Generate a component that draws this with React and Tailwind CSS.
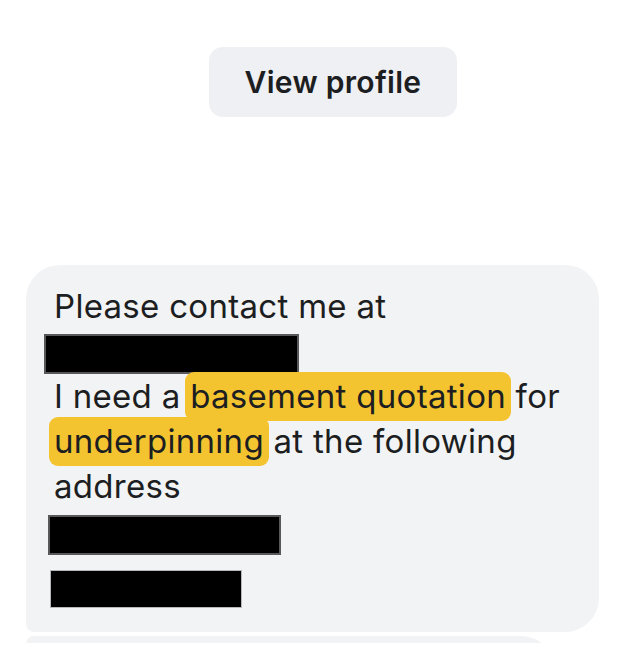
import React from 'react';

const Mark = ({ children }) => (
  <span className="bg-[#f4c430] rounded-[9px] px-[5px] pt-[4px] pb-[5px] -mx-[5px]">{children}</span>
);

const Redacted = ({ className }) => <div className={`bg-black ${className}`} />;

const App = () => {
  return (
    <div className="w-[632px] h-[662px] overflow-hidden bg-white font-['Inter',sans-serif] text-[#1c1e21]">
      <div className="flex justify-center pt-[47px] pl-[34px]">
        <button className="w-[248px] h-[70px] rounded-[14px] bg-[#eff0f4] text-[30px] font-semibold tracking-[0.3px]">
          View profile
        </button>
      </div>

      <div className="mt-[148px] ml-[26px] w-[573px] rounded-tl-[34px] rounded-tr-[34px] rounded-br-[34px] rounded-bl-[8px] bg-[#f2f3f5] pl-[28px] pr-[10px] pt-[19px] pb-[24px] text-[33px] leading-[45px] tracking-[0.3px]">
        <p>Please contact me at</p>
        <Redacted className="-ml-[10px] mt-[5px] w-[255px] h-[40px] border-2 border-[#58585a]" />
        <p className="whitespace-nowrap">
          I need a <Mark>basement quotation</Mark> for
        </p>
        <p>
          <Mark>underpinning</Mark> at the following
        </p>
        <p>address</p>
        <Redacted className="-ml-[6px] mt-[6px] w-[233px] h-[40px] border-2 border-[#58585a]" />
        <Redacted className="-ml-[4px] mt-[15px] w-[192px] h-[38px] border border-[#b8b8ba]" />
      </div>

      <div className="mt-[4px] h-[7px] overflow-hidden">
        <div className="ml-[26px] w-[529px] h-[40px] rounded-tl-[8px] rounded-tr-[34px] bg-[#f2f3f5]" />
      </div>
    </div>
  );
};

export default App;
